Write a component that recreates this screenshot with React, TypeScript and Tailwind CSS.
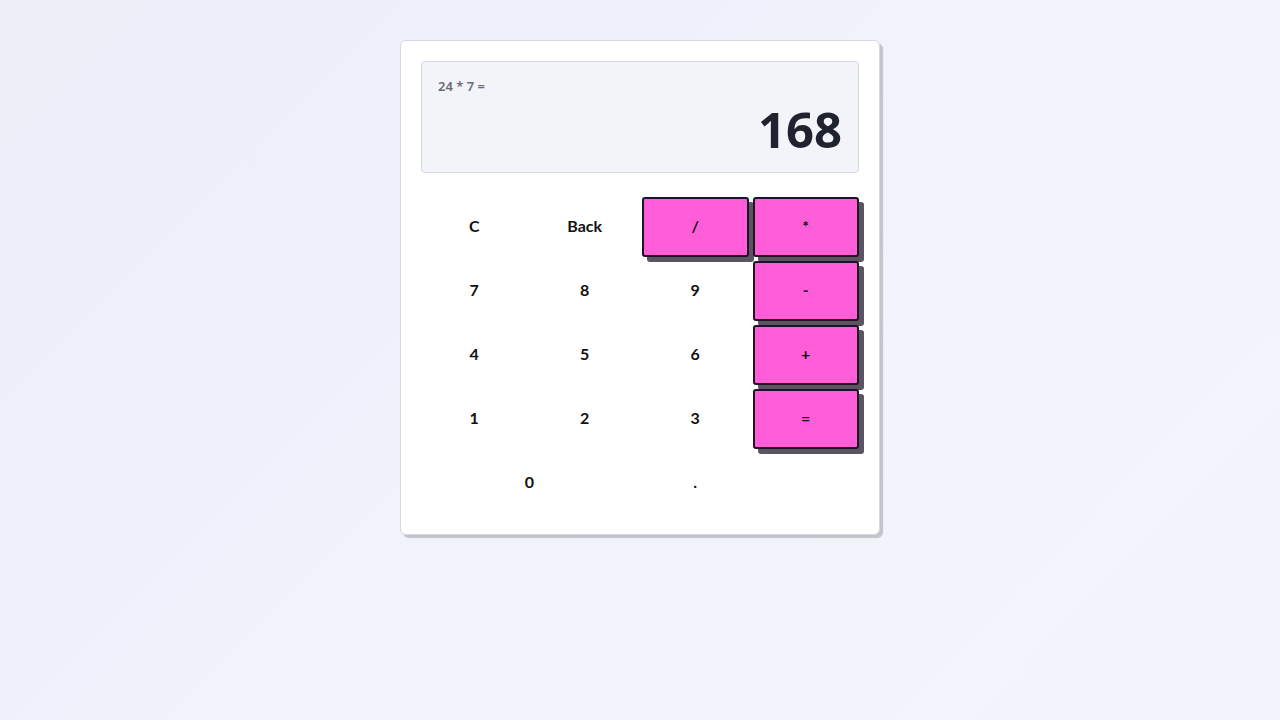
import React from "react";

type Key = { label: string; op?: boolean; span?: number };

const keys: Key[] = [
  { label: "C" },
  { label: "Back" },
  { label: "/", op: true },
  { label: "*", op: true },
  { label: "7" },
  { label: "8" },
  { label: "9" },
  { label: "-", op: true },
  { label: "4" },
  { label: "5" },
  { label: "6" },
  { label: "+", op: true },
  { label: "1" },
  { label: "2" },
  { label: "3" },
  { label: "=", op: true },
  { label: "0", span: 2 },
  { label: "." },
];

export default function App() {
  return (
    <div className="min-h-[720px] w-full bg-[linear-gradient(135deg,#eceef8_0%,#eef1fb_35%,#f1f3fc_45%,#f3f4fb_100%)] flex justify-center pt-[40px]">
      <div className="w-[480px] h-[495px] bg-white border border-[#d8d9e0] rounded-[6px] shadow-[3px_3px_1px_#c3c3c8] px-[20px] pt-[20px]">
        <div className="h-[112px] bg-[#f3f4fa] border border-[#d5d7de] rounded-[4px] px-[16px] pt-[15px] pb-[18px] flex flex-col justify-between">
          <div className="text-[13px] leading-[18px] font-semibold text-[#6b6b78] [font-family:'Noto_Sans',sans-serif]">
            24 * 7 =
          </div>
          <div className="text-right text-[49px] leading-none font-bold text-[#1f2330] [font-family:'Noto_Sans',sans-serif]">
            168
          </div>
        </div>
        <div className="mt-[24px] grid grid-cols-4 gap-[4px] auto-rows-[60px]">
          {keys.map((k) => (
            <button
              key={k.label}
              className={
                (k.span === 2 ? "col-span-2 " : "") +
                (k.op
                  ? "bg-[#ff5ed8] border-2 border-[#1b1424] rounded-[3px] shadow-[5px_5px_0_#5a5561] "
                  : "bg-transparent ") +
                "flex items-center justify-center pb-[2px] text-[16px] font-bold text-[#111] [font-family:'Lato',sans-serif]"
              }
            >
              {k.label}
            </button>
          ))}
        </div>
      </div>
    </div>
  );
}
